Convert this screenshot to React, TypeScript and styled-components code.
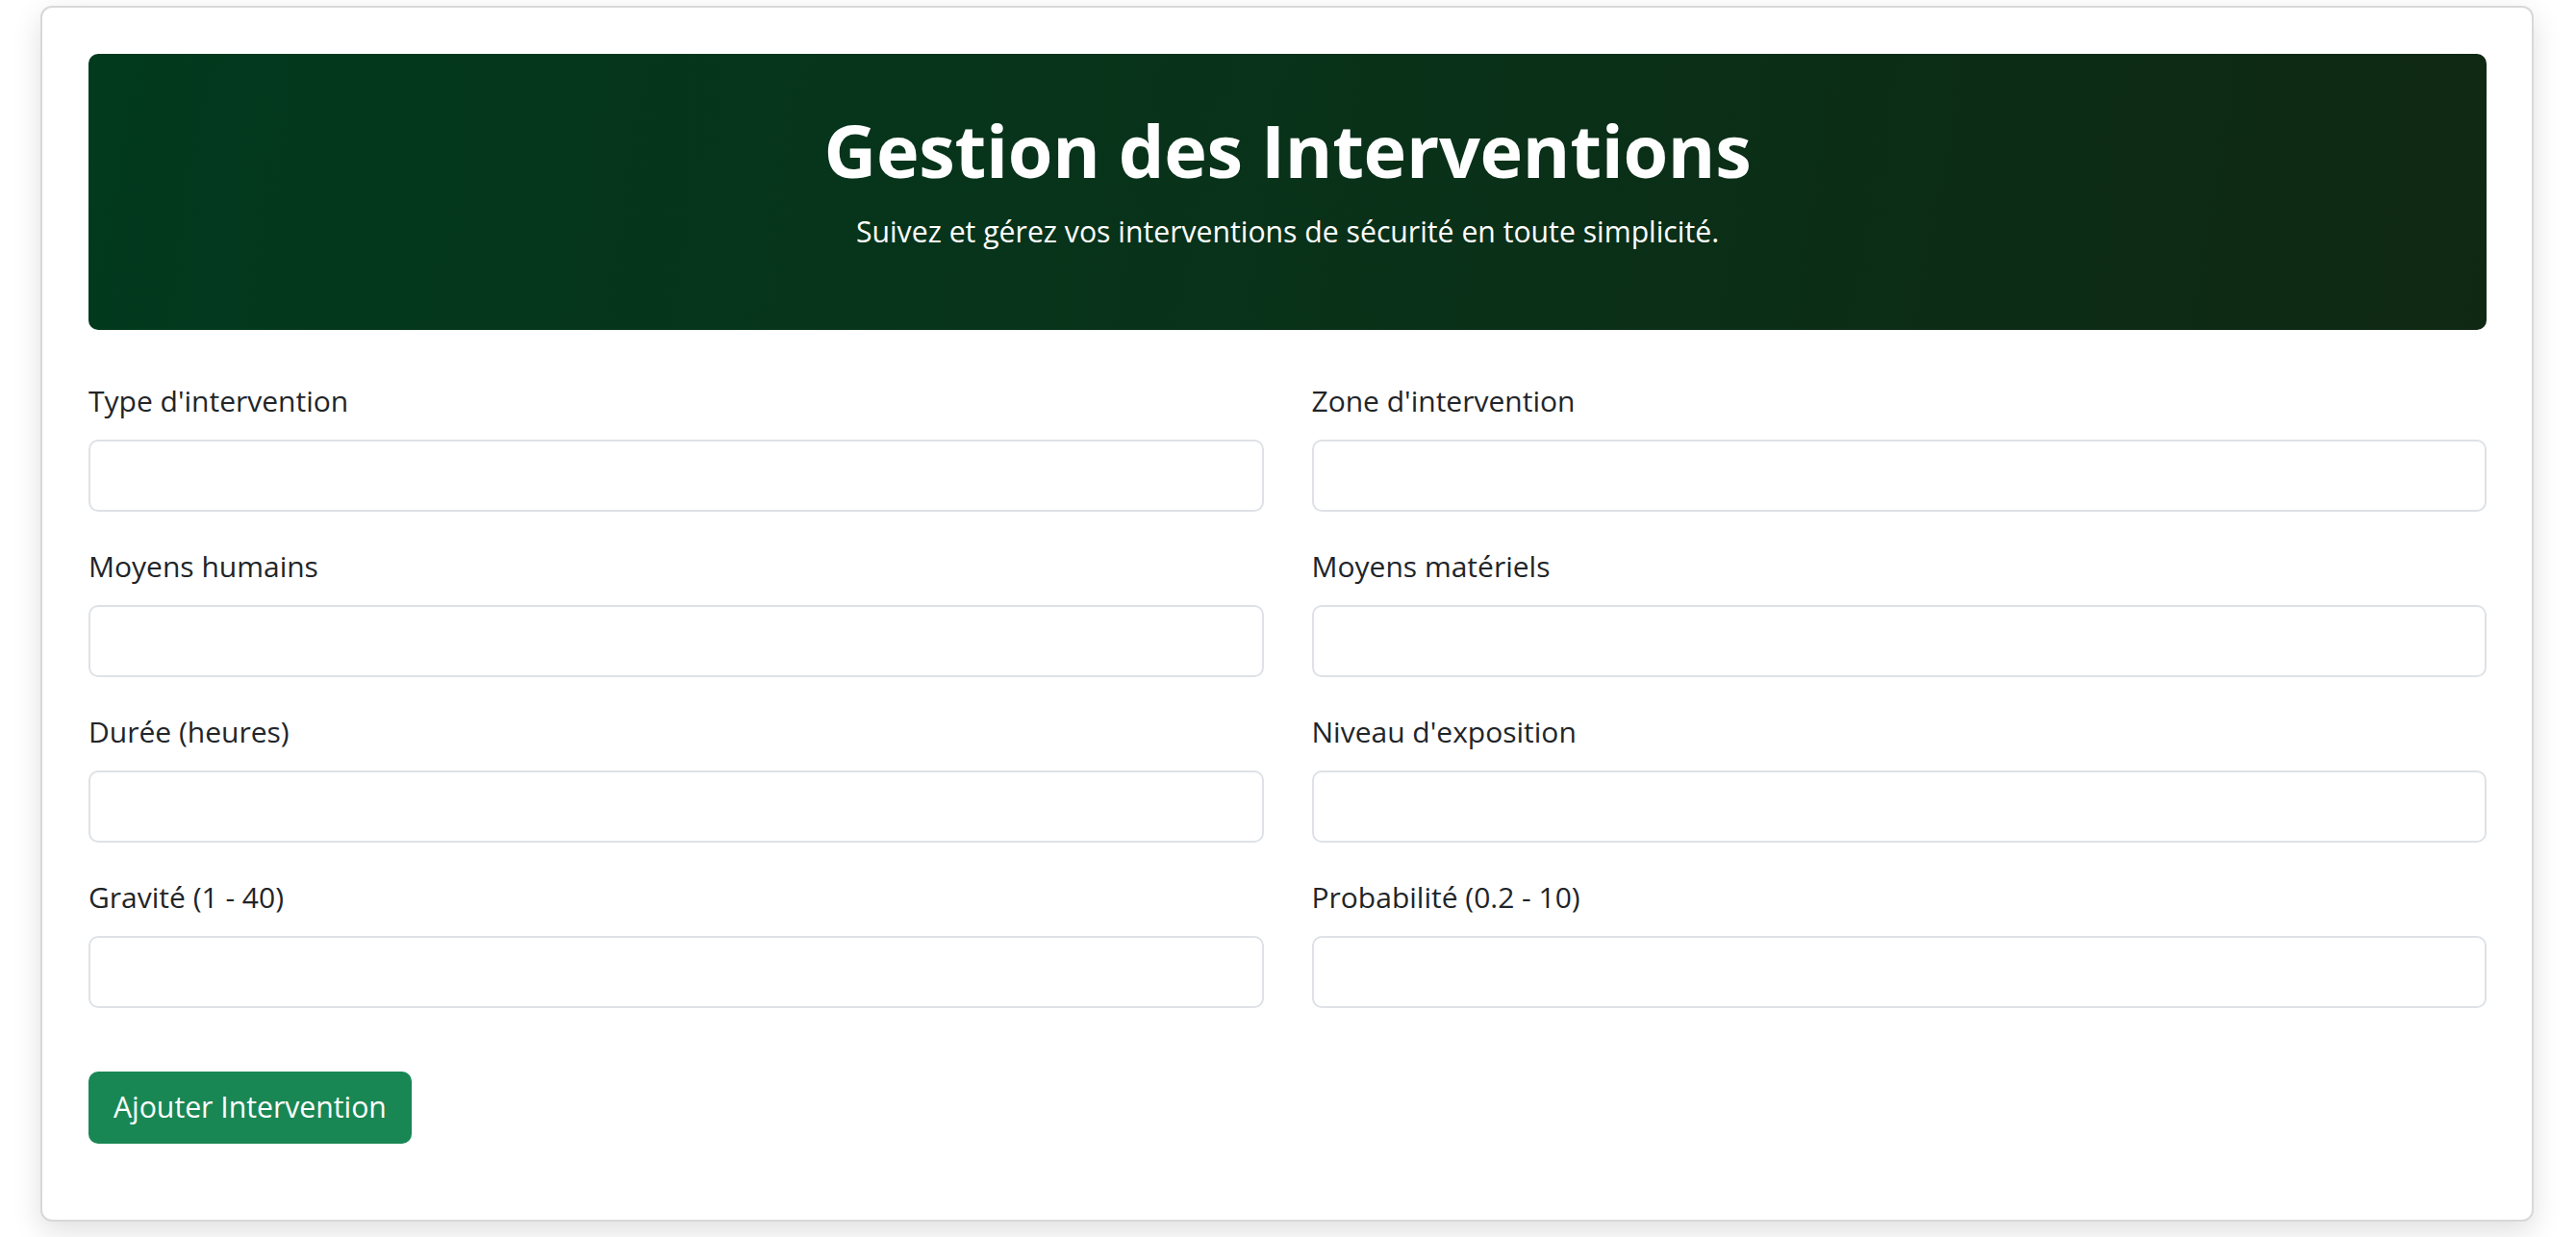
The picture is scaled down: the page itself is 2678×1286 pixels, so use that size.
import React from "react";
import styled, { createGlobalStyle } from "styled-components";

const GlobalStyle = createGlobalStyle`
  html, body {
    margin: 0;
    padding: 0;
    background: #ffffff;
  }
  body {
    font-family: "Open Sans", "Noto Sans", "Liberation Sans", sans-serif;
    color: #212529;
  }
  * { box-sizing: border-box; }
`;

const Page = styled.div`
  padding: 6px 44px 18px 42px;
`;

const Card = styled.div`
  background: #ffffff;
  border: 2px solid #d8d8d8;
  border-radius: 12px;
  padding: 48px 47px 79px 48px;
  box-shadow: 0 10px 30px rgba(0, 0, 0, 0.13);
`;

const Hero = styled.header`
  border-radius: 10px;
  background: linear-gradient(100deg, #023a1e 0%, #08331a 45%, #0f2813 100%);
  color: #ffffff;
  text-align: center;
  padding: 55px 40px 55px;
`;

const Title = styled.h1`
  margin: 0 0 17px;
  font-size: 75.5px;
  font-weight: 700;
  line-height: 90px;
  letter-spacing: -0.3px;
`;

const Subtitle = styled.p`
  margin: 0 0 25px;
  font-size: 30.2px;
  line-height: 45px;
`;

const Form = styled.form`
  margin-top: 51px;
  display: grid;
  grid-template-columns: 1fr 1fr;
  column-gap: 50px;
  row-gap: 34px;
`;

const Field = styled.div`
  display: flex;
  flex-direction: column;
`;

const Label = styled.label`
  font-size: 30px;
  line-height: 45px;
  margin-bottom: 18px;
  color: #212529;
`;

const Input = styled.input`
  height: 75px;
  width: 100%;
  border: 2px solid #dee2e6;
  border-radius: 10px;
  background: #ffffff;
  font-family: inherit;
  font-size: 28px;
  padding: 0 20px;
  outline: none;
`;

const Actions = styled.div`
  grid-column: 1 / -1;
  margin-top: 32px;
`;

const SubmitButton = styled.button`
  height: 75px;
  padding: 0 26px;
  background: #198754;
  color: #ffffff;
  border: none;
  border-radius: 10px;
  font-family: inherit;
  font-size: 30.2px;
  line-height: 1;
  cursor: pointer;
`;

const fields = [
  "Type d'intervention",
  "Zone d'intervention",
  "Moyens humains",
  "Moyens matériels",
  "Durée (heures)",
  "Niveau d'exposition",
  "Gravité (1 - 40)",
  "Probabilité (0.2 - 10)",
];

export default function App() {
  return (
    <>
      <GlobalStyle />
      <Page>
        <Card>
          <Hero>
            <Title>Gestion des Interventions</Title>
            <Subtitle>
              Suivez et gérez vos interventions de sécurité en toute simplicité.
            </Subtitle>
          </Hero>
          <Form onSubmit={(e) => e.preventDefault()}>
            {fields.map((f, i) => (
              <Field key={f}>
                <Label htmlFor={`f${i}`}>{f}</Label>
                <Input id={`f${i}`} type="text" />
              </Field>
            ))}
            <Actions>
              <SubmitButton type="submit">Ajouter Intervention</SubmitButton>
            </Actions>
          </Form>
        </Card>
      </Page>
    </>
  );
}
